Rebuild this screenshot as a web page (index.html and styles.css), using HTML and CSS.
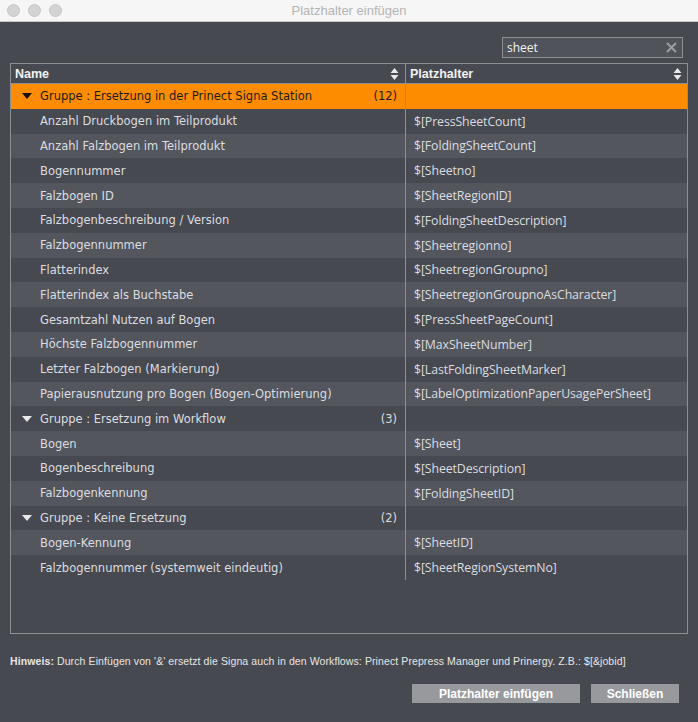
FILE: index.html
```html
<!DOCTYPE html>
<html lang="de">
<head>
    <meta charset="UTF-8">
    <title>Platzhalter einfügen</title>
    <link rel="stylesheet" href="styles.css">
</head>
<body>
    <div class="window">
        <!-- Titelleiste -->
        <div class="titlebar">
            <div class="lights">
                <span class="light"></span>
                <span class="light"></span>
                <span class="light"></span>
            </div>
            <div class="title">Platzhalter einfügen</div>
        </div>

        <div class="dialog">
            <div class="search-row">
                <div class="search">
                    <span class="search-text">sheet</span>
                    <svg class="clear" width="11" height="11" viewBox="0 0 11 11">
                        <path d="M1 1 L10 10 M10 1 L1 10" stroke="#9c9ea2" stroke-width="2"/>
                    </svg>
                </div>
            </div>

            <!-- Tabelle -->
            <div class="table">
                <div class="thead">
                    <div class="th th-name">
                        <span>Name</span>
                        <svg class="sort" width="9" height="14" viewBox="0 0 9 14">
                            <path d="M4.5 1 L8.5 6 L0.5 6 Z M0.5 8 L8.5 8 L4.5 13 Z" fill="#e8e8ea"/>
                        </svg>
                    </div>
                    <div class="th th-platz">
                        <span>Platzhalter</span>
                        <svg class="sort" width="9" height="14" viewBox="0 0 9 14">
                            <path d="M4.5 1 L8.5 6 L0.5 6 Z M0.5 8 L8.5 8 L4.5 13 Z" fill="#e8e8ea"/>
                        </svg>
                    </div>
                </div>
                <div class="tbody" id="rows"></div>
            </div>

            <div class="hint"><b>Hinweis:</b> Durch Einfügen von '&amp;' ersetzt die Signa auch in den Workflows: Prinect Prepress Manager und Prinergy. Z.B.: $[&amp;jobid]</div>

            <div class="buttons">
                <button class="btn btn-insert">Platzhalter einfügen</button>
                <button class="btn btn-close">Schließen</button>
            </div>
        </div>
    </div>

    <script>
        var groups = [
            { name: 'Gruppe : Ersetzung in der Prinect Signa Station', count: 12, selected: true, items: [
                ['Anzahl Druckbogen im Teilprodukt', '$[PressSheetCount]'],
                ['Anzahl Falzbogen im Teilprodukt', '$[FoldingSheetCount]'],
                ['Bogennummer', '$[Sheetno]'],
                ['Falzbogen ID', '$[SheetRegionID]'],
                ['Falzbogenbeschreibung / Version', '$[FoldingSheetDescription]'],
                ['Falzbogennummer', '$[Sheetregionno]'],
                ['Flatterindex', '$[SheetregionGroupno]'],
                ['Flatterindex als Buchstabe', '$[SheetregionGroupnoAsCharacter]'],
                ['Gesamtzahl Nutzen auf Bogen', '$[PressSheetPageCount]'],
                ['Höchste Falzbogennummer', '$[MaxSheetNumber]'],
                ['Letzter Falzbogen (Markierung)', '$[LastFoldingSheetMarker]'],
                ['Papierausnutzung pro Bogen (Bogen-Optimierung)', '$[LabelOptimizationPaperUsagePerSheet]']
            ]},
            { name: 'Gruppe : Ersetzung im Workflow', count: 3, items: [
                ['Bogen', '$[Sheet]'],
                ['Bogenbeschreibung', '$[SheetDescription]'],
                ['Falzbogenkennung', '$[FoldingSheetID]']
            ]},
            { name: 'Gruppe : Keine Ersetzung', count: 2, items: [
                ['Bogen-Kennung', '$[SheetID]'],
                ['Falzbogennummer (systemweit eindeutig)', '$[SheetRegionSystemNo]']
            ]}
        ];

        var rows = document.getElementById('rows');
        var index = 0;

        function addRow(cls, nameHtml, platz) {
            var row = document.createElement('div');
            row.className = 'row ' + (index % 2 ? 'odd' : 'even') + ' ' + cls;
            row.innerHTML = '<div class="td td-name">' + nameHtml + '</div><div class="td td-platz">' + platz + '</div>';
            rows.appendChild(row);
            index++;
        }

        groups.forEach(function(group) {
            addRow(group.selected ? 'group selected' : 'group',
                '<span class="arrow"></span><span class="gname">' + group.name + '</span><span class="count">(' + group.count + ')</span>', '');
            group.items.forEach(function(item) {
                addRow('item', item[0], item[1]);
            });
        });
    </script>
</body>
</html>
```

FILE: styles.css
```css
body {
    margin: 0;
    padding: 0;
    background-color: #46494f;
    font-family: "DejaVu Sans", "Liberation Sans", sans-serif;
}
.window {
    width: 698px;
    height: 722px;
    background-color: #46494f;
}
.titlebar {
    height: 21px;
    border-bottom: 1px solid #c9c9c9;
    background-color: #f6f6f6;
    display: flex;
    align-items: center;
    position: relative;
}
.lights {
    display: flex;
    gap: 8px;
    padding-left: 7px;
}
.light {
    width: 11px;
    height: 11px;
    border-radius: 50%;
    background-color: #d3d3d3;
    border: 0.5px solid #c6c6c6;
}
.title {
    position: absolute;
    left: 0;
    right: 0;
    text-align: center;
    font-family: "Liberation Sans", sans-serif;
    font-size: 13px;
    color: #b4b4b4;
}
.dialog {
    padding: 0 10px;
}
.search-row {
    display: flex;
    justify-content: flex-end;
    padding-top: 15px;
    padding-right: 5px;
}
.search {
    width: 170px;
    height: 19px;
    border: 1px solid #8c8f94;
    background-color: #50535a;
    display: flex;
    align-items: center;
    justify-content: space-between;
    padding: 0 5px 0 4px;
    box-sizing: content-box;
}
.search-text {
    color: #f2f2f2;
    font-family: "Open Sans", sans-serif;
    font-size: 12px;
}
.table {
    margin-top: 5px;
    height: 569px;
    border: 1px solid #8c8f94;
    overflow: hidden;
}
.thead {
    display: grid;
    grid-template-columns: 394px 1fr;
    height: 19px;
    border-bottom: 1px solid #8c8f94;
}
.th {
    display: flex;
    align-items: center;
    justify-content: space-between;
    font-family: "Liberation Sans", sans-serif;
    font-weight: bold;
    font-size: 12.5px;
    color: #f2f2f2;
}
.th-name {
    padding: 0 6px 0 4px;
}
.th-platz {
    border-left: 1px solid #8c8f94;
    padding: 0 5px 0 4px;
}
.row {
    display: grid;
    grid-template-columns: 394px 1fr;
    height: 24.8px;
    font-size: 11.5px;
    color: #dcdde0;
}
.row.even {
    background-color: #53565d;
}
.row.odd {
    background-color: #46494f;
}
.row.selected {
    background-color: #fd8c00;
    color: #1c1c1c;
}
.td {
    display: flex;
    align-items: center;
    white-space: nowrap;
    overflow: hidden;
}
.td-name {
    padding-left: 29px;
}
.group .td-name {
    padding-left: 11px;
    padding-right: 8px;
}
.td-platz {
    border-left: 1px solid #8c8f94;
    padding-left: 8px;
    font-family: "Open Sans", sans-serif;
    font-size: 12.3px;
    letter-spacing: -0.1px;
}
.arrow {
    width: 0;
    height: 0;
    border-left: 5px solid transparent;
    border-right: 5px solid transparent;
    border-top: 6px solid #e8e8ea;
    margin-right: 8px;
}
.selected .arrow {
    border-top-color: #111;
}
.gname {
    flex: 1;
}
.hint {
    margin-top: 20px;
    font-family: "Liberation Sans", sans-serif;
    font-size: 10.5px;
    letter-spacing: 0.1px;
    color: #e6e6e6;
    line-height: 14px;
}
.buttons {
    display: flex;
    justify-content: flex-end;
    gap: 11px;
    margin-top: 16px;
    padding-right: 9px;
}
.btn {
    height: 19px;
    border: none;
    background-color: #97999d;
    color: #ffffff;
    font-family: "Liberation Sans", sans-serif;
    font-weight: bold;
    font-size: 12px;
    padding: 0;
}
.btn-insert {
    width: 168px;
}
.btn-close {
    width: 88px;
}
```
